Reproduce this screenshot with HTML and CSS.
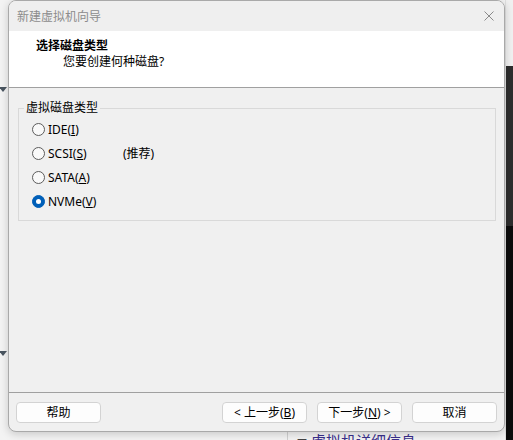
FILE: index.html
```html
<!DOCTYPE html>
<html lang="zh-CN">
<head>
<meta charset="utf-8">
<title>新建虚拟机向导</title>
<link rel="stylesheet" href="styles.css">
</head>
<body>
<div class="desktop">
  <div class="bg-right"><div class="bg-right-dark"></div><div class="bg-right-black"></div></div>
  <span class="bg-arrow bg-arrow-1"></span>
  <span class="bg-arrow bg-arrow-2"></span>
  <div class="bg-bottom">
    <span class="bg-divider"></span>
    <span class="bg-caption"><span class="bg-tri">▼</span> 虚拟机详细信息</span>
  </div>

  <div class="dialog">
    <div class="titlebar">
      <span class="title">新建虚拟机向导</span>
      <svg class="close" width="10" height="10" viewBox="0 0 10 10"><path d="M0.5 0.5 L9.5 9.5 M9.5 0.5 L0.5 9.5" stroke="#8a8a8a" stroke-width="1" fill="none"/></svg>
    </div>
    <div class="header">
      <div class="h-title">选择磁盘类型</div>
      <div class="h-sub">您要创建何种磁盘?</div>
    </div>
    <div class="content">
      <fieldset class="group">
        <legend>虚拟磁盘类型</legend>
        <div class="row"><span class="radio"></span><span class="lbl">IDE(<u>I</u>)</span></div>
        <div class="row"><span class="radio"></span><span class="lbl">SCSI(<u>S</u>)</span><span class="note">(推荐)</span></div>
        <div class="row"><span class="radio"></span><span class="lbl">SATA(<u>A</u>)</span></div>
        <div class="row"><span class="radio checked"></span><span class="lbl">NVMe(<u>V</u>)</span></div>
      </fieldset>
    </div>
    <div class="footer">
      <button class="btn">帮助</button>
      <span class="spacer"></span>
      <button class="btn">&lt; 上一步(<u>B</u>)</button>
      <button class="btn">下一步(<u>N</u>) &gt;</button>
      <button class="btn">取消</button>
    </div>
  </div>
</div>
</body>
</html>
```
FILE: styles.css
```css
html, body {
  margin: 0;
  padding: 0;
  width: 513px;
  height: 440px;
  overflow: hidden;
  background: #f3f3f3;
  font-family: "Noto Sans", "Noto Sans CJK SC", sans-serif;
  font-size: 12px;
  color: #000;
}
.desktop {
  position: relative;
  width: 513px;
  height: 440px;
}
.bg-right {
  position: absolute;
  left: 505px;
  top: 0;
  width: 8px;
  height: 440px;
  background: #f0f0f0;
  border-left: 1px solid #e0e0e0;
}
.bg-right-dark {
  position: absolute;
  left: 0;
  top: 66px;
  width: 8px;
  height: 160px;
  background: #2d2d2d;
}
.bg-right-black {
  position: absolute;
  left: 0;
  top: 226px;
  width: 8px;
  height: 214px;
  background: #0c0c0c;
}
.bg-arrow {
  position: absolute;
  left: 0;
  width: 0;
  height: 0;
  border-left: 4px solid transparent;
  border-right: 4px solid transparent;
  border-top: 5px solid #4a5560;
}
.bg-arrow-1 { top: 87px; left: -1px; }
.bg-arrow-2 { top: 351px; left: -1px; }
.bg-bottom {
  position: absolute;
  left: 0;
  top: 430px;
  width: 513px;
  height: 10px;
}
.bg-divider {
  position: absolute;
  left: 287px;
  top: 0;
  width: 1px;
  height: 10px;
  background: #d0d0d0;
}
.bg-caption {
  position: absolute;
  left: 297px;
  top: 1px;
  font-size: 15px;
  line-height: 20px;
  color: #3a2f8c;
  white-space: nowrap;
}
.bg-tri {
  color: #444;
  font-size: 10px;
}
.dialog {
  position: absolute;
  left: 8px;
  top: 0;
  width: 497px;
  height: 432px;
  box-sizing: border-box;
  border: 1px solid #a9a9a9;
  border-radius: 8px;
  background: #f0f0f0;
  box-shadow: 0 2px 8px rgba(0, 0, 0, 0.18);
  overflow: hidden;
  display: flex;
  flex-direction: column;
}
.titlebar {
  height: 30px;
  display: flex;
  align-items: center;
  padding-left: 8px;
  padding-right: 10px;
  background: #efefef;
}
.title {
  flex: 1;
  color: #8c8c8c;
  font-size: 12px;
}
.close {
  display: block;
}
.header {
  height: 49px;
  padding-top: 7px;
  background: #ffffff;
  border-bottom: 1px solid #a0a0a0;
}
.h-title {
  padding-left: 27px;
  line-height: 16px;
  font-weight: bold;
}
.h-sub {
  padding-left: 54px;
  line-height: 16px;
}
.content {
  height: 304px;
  padding: 0 8px 0 9px;
  box-sizing: border-box;
}
.group {
  margin: 12px 0 0 0;
  padding: 1px 0 7px 0;
  border: 1px solid #d9d9d9;
  border-radius: 0;
}
.group legend {
  margin-left: 5px;
  padding: 0 2px;
  line-height: 16px;
}
.row {
  height: 24px;
  display: flex;
  align-items: center;
  padding-left: 13px;
}
.radio {
  width: 13px;
  height: 13px;
  box-sizing: border-box;
  border: 1px solid #5c5c5c;
  border-radius: 50%;
  background: #f9f9f9;
  margin-right: 3px;
  position: relative;
}
.radio.checked {
  background: #005fb8;
  border-color: #005fb8;
}
.radio.checked::after {
  content: "";
  position: absolute;
  left: 3px;
  top: 3px;
  width: 5px;
  height: 5px;
  border-radius: 50%;
  background: #ffffff;
}
.lbl {
  min-width: 75px;
}
.note {
  margin-left: 0;
}
.footer {
  flex: 1;
  border-top: 1px solid #a0a0a0;
  display: flex;
  align-items: flex-start;
  padding: 9px 7px 0 7px;
  gap: 10px;
}
.spacer {
  flex: 1;
}
.btn {
  width: 85px;
  height: 21px;
  padding: 0;
  background: #fdfdfd;
  border: 1px solid #d3d3d3;
  border-radius: 4px;
  font-family: "Noto Sans", "Noto Sans CJK SC", sans-serif;
  font-size: 12px;
  color: #000;
  line-height: 19px;
}
```
